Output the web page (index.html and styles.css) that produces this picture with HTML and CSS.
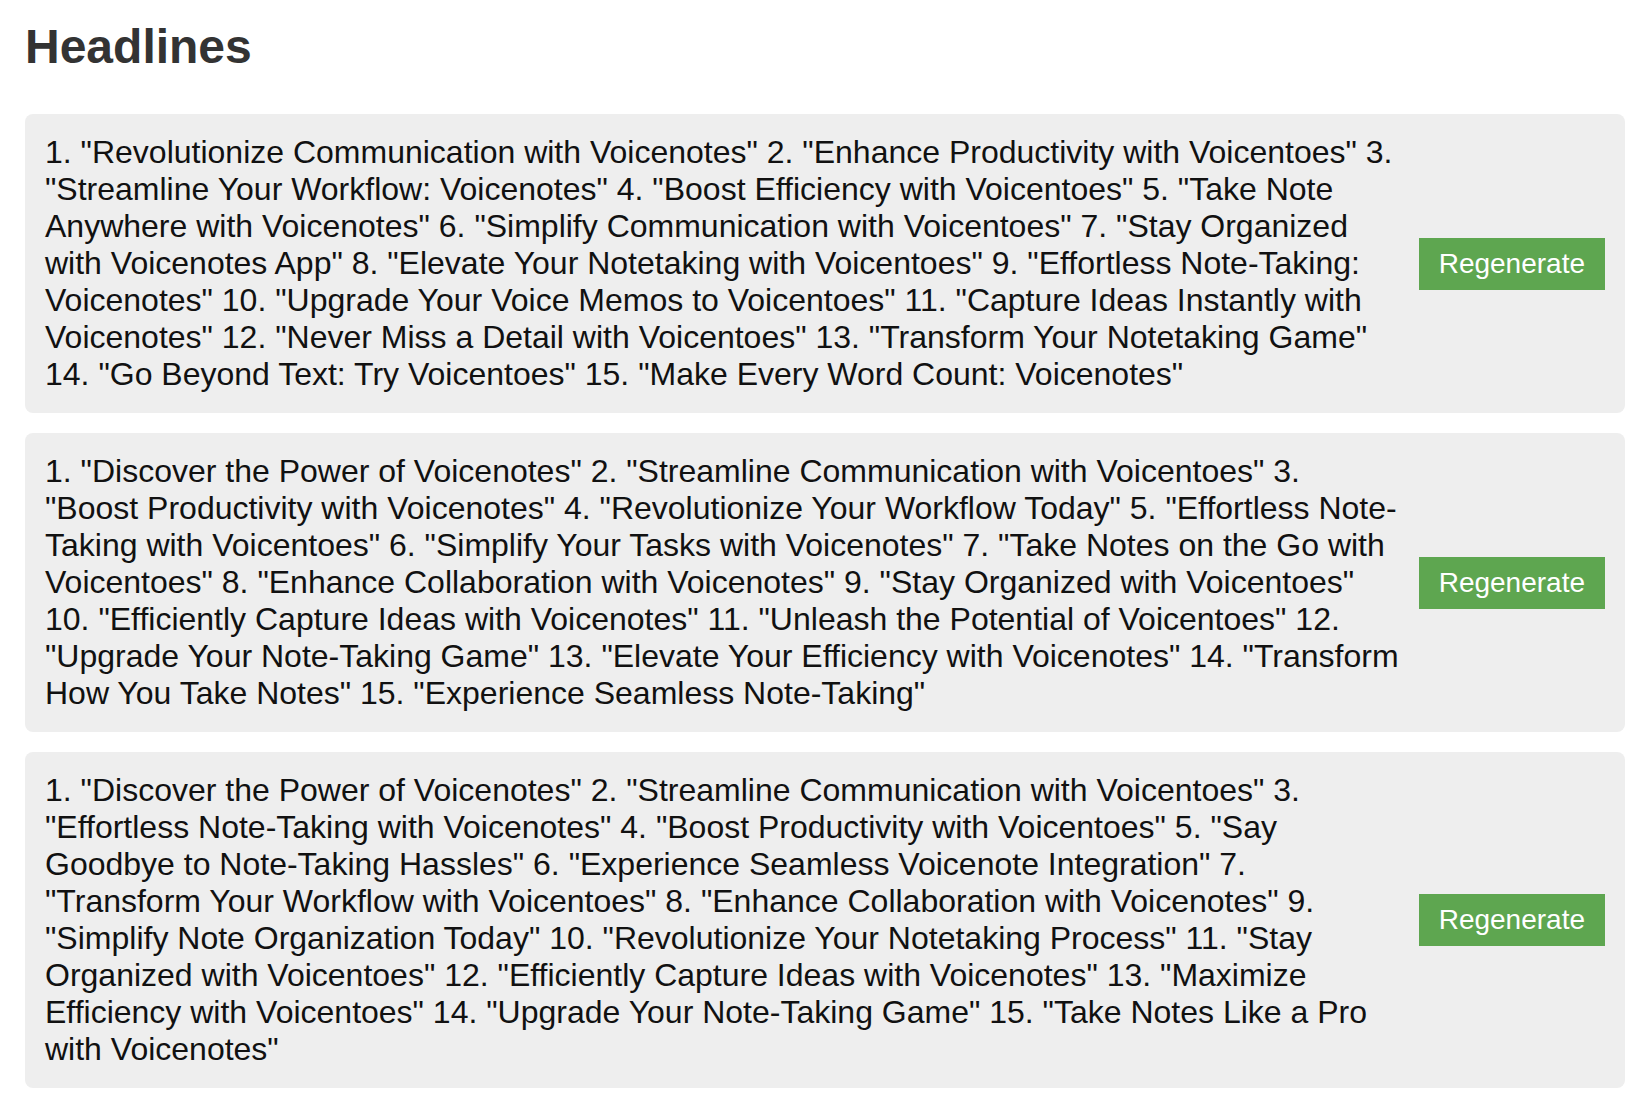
FILE: index.html
```html
<!DOCTYPE html>
<html>
<head>
<meta charset="utf-8">
<link rel="stylesheet" href="styles.css">
</head>
<body>
<div class="page">
  <h1 class="title">Headlines</h1>
  <div class="card">
    <div class="card-text">1. "Revolutionize Communication with Voicenotes" 2. "Enhance Productivity with Voicentoes" 3. "Streamline Your Workflow: Voicenotes" 4. "Boost Efficiency with Voicentoes" 5. "Take Note Anywhere with Voicenotes" 6. "Simplify Communication with Voicentoes" 7. "Stay Organized with Voicenotes App" 8. "Elevate Your Notetaking with Voicentoes" 9. "Effortless Note-Taking: Voicenotes" 10. "Upgrade Your Voice Memos to Voicentoes" 11. "Capture Ideas Instantly with Voicenotes" 12. "Never Miss a Detail with Voicentoes" 13. "Transform Your Notetaking Game" 14. "Go Beyond Text: Try Voicentoes" 15. "Make Every Word Count: Voicenotes"</div>
    <button class="btn">Regenerate</button>
  </div>
  <div class="card">
    <div class="card-text">1. "Discover the Power of Voicenotes" 2. "Streamline Communication with Voicentoes" 3. "Boost Productivity with Voicenotes" 4. "Revolutionize Your Workflow Today" 5. "Effortless Note-Taking with Voicentoes" 6. "Simplify Your Tasks with Voicenotes" 7. "Take Notes on the Go with Voicentoes" 8. "Enhance Collaboration with Voicenotes" 9. "Stay Organized with Voicentoes" 10. "Efficiently Capture Ideas with Voicenotes" 11. "Unleash the Potential of Voicentoes" 12. "Upgrade Your Note-Taking Game" 13. "Elevate Your Efficiency with Voicenotes" 14. "Transform How You Take Notes" 15. "Experience Seamless Note-Taking"</div>
    <button class="btn">Regenerate</button>
  </div>
  <div class="card">
    <div class="card-text">1. "Discover the Power of Voicenotes" 2. "Streamline Communication with Voicentoes" 3. "Effortless Note-Taking with Voicenotes" 4. "Boost Productivity with Voicentoes" 5. "Say Goodbye to Note-Taking Hassles" 6. "Experience Seamless Voicenote Integration" 7. "Transform Your Workflow with Voicentoes" 8. "Enhance Collaboration with Voicenotes" 9. "Simplify Note Organization Today" 10. "Revolutionize Your Notetaking Process" 11. "Stay Organized with Voicentoes" 12. "Efficiently Capture Ideas with Voicenotes" 13. "Maximize Efficiency with Voicentoes" 14. "Upgrade Your Note-Taking Game" 15. "Take Notes Like a Pro with Voicenotes"</div>
    <button class="btn">Regenerate</button>
  </div>
</div>
</body>
</html>
```
FILE: styles.css
```css
html, body {
  margin: 0;
  padding: 0;
  background: #fff;
}
body {
  font-family: "Liberation Sans", Arial, sans-serif;
  color: #111;
}
.page {
  padding: 19px 19px 0 25px;
  display: flex;
  flex-direction: column;
  gap: 20px;
}
.title {
  font-size: 48px;
  font-weight: bold;
  color: #333;
  margin: 0 0 20px 0;
}
.card {
  background: #eee;
  border-radius: 8px;
  padding: 20px;
  display: flex;
  align-items: center;
  gap: 20px;
}
.card-text {
  flex: 1;
  font-size: 32px;
  line-height: 37px;
}
.btn {
  flex: none;
  background: #5ea650;
  color: #fff;
  border: none;
  border-radius: 0;
  font-family: "Liberation Sans", Arial, sans-serif;
  font-size: 28px;
  padding: 10px 20px;
  line-height: normal;
}
```
